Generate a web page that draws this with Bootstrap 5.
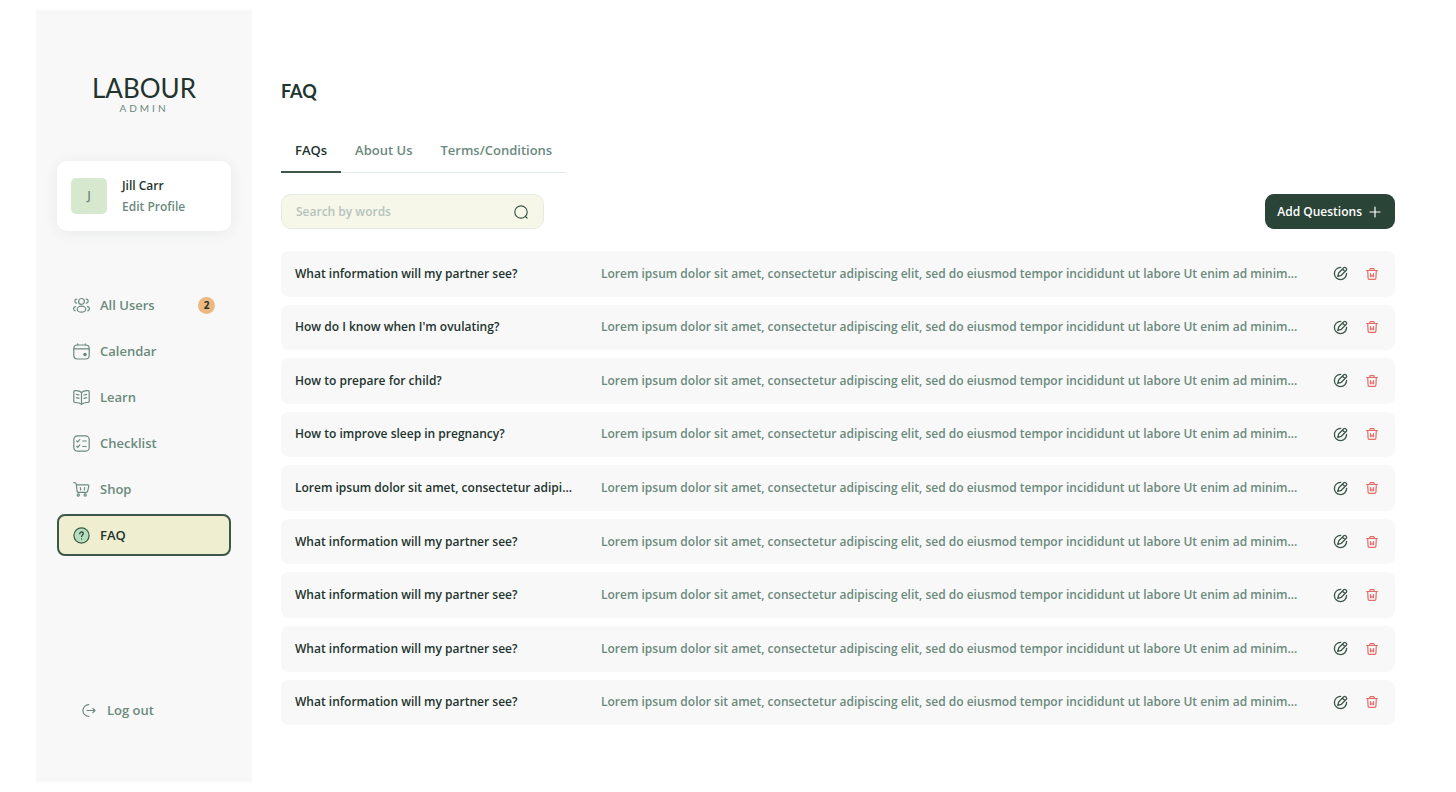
<!DOCTYPE html>
<html lang="en">
<head>
<meta charset="utf-8">
<meta name="viewport" content="width=device-width, initial-scale=1">
<title>Labour Admin – FAQ</title>
<link href="https://cdn.jsdelivr.net/npm/bootstrap@5.3.0/dist/css/bootstrap.min.css" rel="stylesheet">
<style>
  :root { --ink: #22342e; --forest: #2a4437; --sage: #6b8a7d; --panel: #f8f8f8; }
  body { font-family: "Open Sans", sans-serif; font-size: 12px; line-height: 20px; color: var(--ink); background: #fff; }
  a { text-decoration: none; }
  svg { display: block; fill: none; stroke: currentColor; stroke-width: 1.2; stroke-linecap: round; stroke-linejoin: round; }

  .shell { padding: 10px 61px 10px 36px; gap: 29px; }
  .sidebar { width: 216px; background: var(--panel); padding: 62px 21px 62px; }
  .brand { font-family: Lato, sans-serif; color: var(--ink); }
  .brand-name { font-size: 26px; line-height: 32px; }
  .brand-sub { font-size: 10px; line-height: 12px; letter-spacing: 3px; color: var(--sage); margin-top: -2px; }
  .profile { margin-top: 47px; padding: 14px; gap: 15px; border-radius: 10px; background: #fff; box-shadow: 0 2px 14px rgba(34, 52, 46, .08); }
  .avatar { width: 36px; height: 36px; border-radius: 5px; background: #d6e9cf; color: var(--sage); font-size: 12px; font-weight: 600; }
  .profile-name { font-weight: 600; line-height: 21px; color: var(--ink); }
  .profile-link { font-weight: 600; line-height: 21px; color: var(--sage); }

  .side-nav { margin-top: 53px; gap: 4px; }
  .side-link { height: 42px; padding: 0 14px; gap: 10px; border: 2px solid transparent; border-radius: 8px; color: var(--sage); font-size: 13px; font-weight: 600; }
  .side-link.active { background: #f0eed0; border-color: #3c5749; color: var(--ink); }
  .count { width: 17px; height: 17px; border-radius: 50%; background: #edb780; color: var(--ink); font-size: 10px; font-weight: 700; }
  .logout { padding-left: 24px; gap: 11px; color: var(--sage); font-size: 13px; font-weight: 600; }

  .content { min-width: 0; padding: 69px 0 57px; }
  .page-title { font-family: Lato, sans-serif; font-size: 18px; line-height: 24px; font-weight: 700; }
  .tabs { margin-top: 27px; border-bottom: 1px solid #e2ebe8; }
  .tabs .nav-link { padding: 10px 14px 11px; margin-bottom: -1px; border-bottom: 2px solid transparent; color: var(--sage); font-size: 13px; font-weight: 600; line-height: 20px; }
  .tabs .nav-link.active { color: var(--ink); border-color: #3c5749; }
  .toolbar { margin-top: 21px; margin-bottom: 22px; }
  .search { width: 263px; height: 35px; padding: 0 14px; border: 1px solid #e3ebe3; border-radius: 10px; background: #f7f7e9; color: #3c5749; }
  .search input { min-width: 0; padding: 0; border: 0; background: none; outline: 0; font-size: 12px; font-weight: 600; color: var(--ink); }
  .search input::placeholder { color: #b5c3bc; opacity: 1; }
  .btn-add { height: 35px; padding: 0 12px; gap: 5px; border-radius: 9px; border: 0; background: var(--forest); color: #fff; font-size: 12px; font-weight: 600; }
  .btn-add:hover { background: #1f3329; color: #fff; }

  .faq tbody { gap: 8px; }
  .faq tr { min-height: 36px; padding: 0 16px 0 14px; border-radius: 8px; background: var(--panel); }
  .faq td { padding: 0; }
  .question { width: 306px; font-weight: 600; }
  .answer { font-weight: 600; color: var(--sage); }
  .act { padding: 0; border: 0; background: none; color: #3c5749; }
  .act-del { color: #e56b69; }
  .actions { gap: 17px; }
</style>
</head>
<body>
<svg class="d-none" aria-hidden="true">
  <symbol id="i-edit" viewBox="0 0 16 16"><path stroke-width="1.400" d="M8.200 1.500A6.500 6.500 0 1 0 14.500 7.800M11.500 1.800a1.400 1.400 0 0 1 2 0l.7.7a1.400 1.400 0 0 1 0 2L8.900 9.900l-3.900 1.200 1.200-3.900zM10.200 3.400l2.500 2.500"/></symbol>
  <symbol id="i-trash" viewBox="0 0 14 14"><path d="M1.600 3.500h10.800M4.600 3.300l.5-1.700h3.800l.5 1.700M2.700 3.600l.4 7.500c0 .8.600 1.300 1.300 1.300h5.200c.7 0 1.300-.5 1.300-1.300l.4-7.500M5.500 6.500v3.200M8.500 6.500v3.200M7 8.200v1.500"/></symbol>
</svg>
<div class="shell d-flex min-vh-100">
  <aside class="sidebar d-flex flex-column flex-shrink-0">
    <div class="brand text-center">
      <div class="brand-name">LABOUR</div>
      <div class="brand-sub">ADMIN</div>
    </div>
    <div class="profile d-flex align-items-center">
      <div class="avatar d-flex align-items-center justify-content-center">J</div>
      <div>
        <div class="profile-name">Jill Carr</div>
        <a class="profile-link d-block" href="#">Edit Profile</a>
      </div>
    </div>
    <nav class="side-nav d-flex flex-column" aria-label="Main">
      <a class="side-link d-flex align-items-center" href="#">
        <svg width="17" height="17" viewBox="0 0 17 17"><circle cx="8.500" cy="4.400" r="2.900"/><ellipse cx="8.500" cy="12.200" rx="4.300" ry="3"/><path d="M3.800 2.100C1.300 2 1.100 6 3.700 6.200M13.200 2.100c2.500-.1 2.700 3.900.1 4.100M2.500 9.600C0 10 0 13.200 2.200 13.800M14.500 9.600c2.500.4 2.500 3.600.3 4.200"/></svg>
        All Users <span class="count d-flex align-items-center justify-content-center ms-auto">2</span>
      </a>
      <a class="side-link d-flex align-items-center" href="#">
        <svg width="17" height="17" viewBox="0 0 17 17"><rect x=".8" y="2" width="15.400" height="14" rx="3.500"/><path d="M1 5.800h15M4.700.9V2M12.300.9V2"/><circle cx="12" cy="11.500" r="1.200" fill="currentColor"/></svg>
        Calendar
      </a>
      <a class="side-link d-flex align-items-center" href="#">
        <svg width="17" height="17" viewBox="0 0 17 17"><path d="M8.500 3.500C6.500 1.700 4 1.400 2 1.700c-.7.1-1.200.6-1.200 1.300v9.200c0 .8.600 1.300 1.400 1.300 2-.1 4.500.2 6.300 1.900 1.800-1.700 4.300-2 6.300-1.900.8 0 1.400-.5 1.400-1.300V3c0-.7-.5-1.200-1.200-1.300-2-.3-4.500 0-6.500 1.800zM8.500 3.500v11.800M3.400 5.300l2.600.7M3.400 8.600l2.600.7M13.600 5.300l-2.600.7M13.600 8.600l-2.600.7"/></svg>
        Learn
      </a>
      <a class="side-link d-flex align-items-center" href="#">
        <svg width="17" height="17" viewBox="0 0 17 17"><rect x=".8" y=".8" width="15.400" height="15.400" rx="3.800"/><path d="M3.700 6l1.100 1 2-2.500M9.700 6h3.500M3.700 11.300l1.100 1 2-2.500M9.700 11.500h3.500"/></svg>
        Checklist
      </a>
      <a class="side-link d-flex align-items-center" href="#">
        <svg width="17" height="17" viewBox="0 0 17 17"><path d="M.9 1.700c1.600 0 2.300.5 2.400 1.600l.8 7c.1.700.5 1 1.200 1h8c.8 0 1.200-.4 1.400-1.200l1.100-5c.2-.8-.2-1.200-1-1.200H3.500M7.300 6.500l.4 2.300M11.700 6.500l-.4 2.300"/><circle cx="5.300" cy="14" r="1.100"/><circle cx="12.200" cy="14" r="1.100"/></svg>
        Shop
      </a>
      <a class="side-link active d-flex align-items-center" href="#" aria-current="page">
        <svg width="17" height="17" viewBox="0 0 17 17"><circle cx="8.500" cy="8.500" r="7.600" fill="#b5dfbd" stroke="#3c5749"/><path stroke="#22342e" d="M6.800 6.800c0-2.600 3.500-2.500 3.500-.2 0 1.500-1.700 1.500-1.700 2.900M8.600 11.900v.1"/></svg>
        FAQ
      </a>
    </nav>
    <a class="logout d-flex align-items-center mt-auto" href="#">
      <svg width="15" height="15" viewBox="0 0 15 15"><path d="M7.800 1.600a5.900 5.900 0 0 0 0 11.800M6 7.500h8M11.800 5.300L14 7.500l-2.200 2.200"/></svg>
      Log out
    </a>
  </aside>

  <main class="content d-flex flex-column flex-grow-1">
    <h1 class="page-title mb-0">FAQ</h1>
    <ul class="tabs nav align-self-start">
      <li class="nav-item"><a class="nav-link active" href="#" aria-current="true">FAQs</a></li>
      <li class="nav-item"><a class="nav-link" href="#">About Us</a></li>
      <li class="nav-item"><a class="nav-link" href="#">Terms/Conditions</a></li>
    </ul>
    <div class="toolbar d-flex justify-content-between">
      <div class="search d-flex align-items-center">
        <input class="flex-grow-1" id="search" type="search" placeholder="Search by words" aria-label="Search by words">
        <svg width="16" height="16" viewBox="0 0 16 16"><circle cx="8" cy="8" r="6.200"/><path d="M12.500 12.500l1.700 1.700"/></svg>
      </div>
      <button class="btn btn-add d-flex align-items-center" type="button">Add Questions
        <svg width="16" height="16" viewBox="0 0 16 16"><path d="M8 3v10M3 8h10"/></svg>
      </button>
    </div>
    <table class="faq d-flex flex-column flex-grow-1" aria-label="Questions">
      <tbody class="d-flex flex-column flex-grow-1" id="faq-rows"></tbody>
    </table>
  </main>
</div>
<script src="https://cdn.jsdelivr.net/npm/bootstrap@5.3.0/dist/js/bootstrap.bundle.min.js"></script>
<script>
  const partner = "What information will my partner see?";
  const answer = "Lorem ipsum dolor sit amet, consectetur adipiscing elit, sed do eiusmod tempor incididunt ut labore Ut enim ad minim...";
  const questions = [partner, "How do I know when I'm ovulating?", "How to prepare for child?", "How to improve sleep in pregnancy?",
    "Lorem ipsum dolor sit amet, consectetur adipi...", partner, partner, partner, partner];
  document.getElementById("faq-rows").innerHTML = questions.map(q => `
    <tr class="d-flex align-items-center flex-grow-1">
      <td class="question flex-shrink-0">${q}</td>
      <td class="answer text-truncate flex-grow-1">${answer}</td>
      <td class="actions d-flex flex-shrink-0">
        <button class="act" type="button" aria-label="Edit"><svg width="15" height="15"><use href="#i-edit"/></svg></button>
        <button class="act act-del" type="button" aria-label="Delete"><svg width="14" height="14"><use href="#i-trash"/></svg></button>
      </td>
    </tr>`).join("");
</script>
</body>
</html>
